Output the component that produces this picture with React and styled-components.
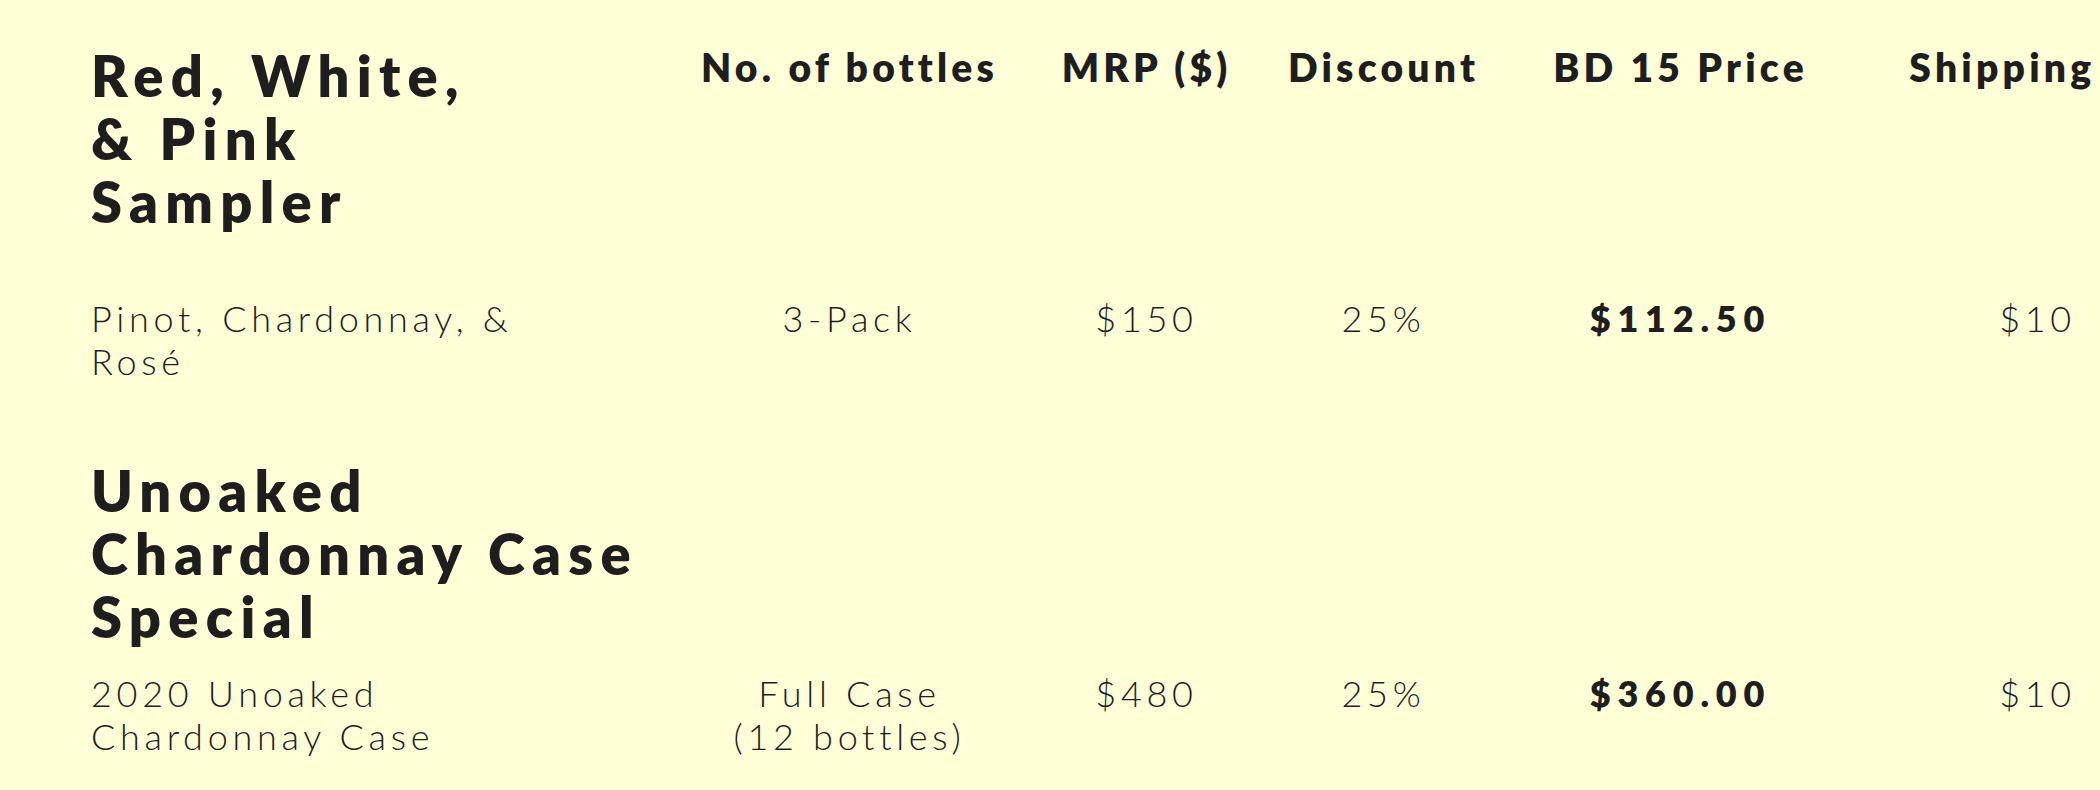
import styled, { createGlobalStyle } from 'styled-components';

const GlobalStyle = createGlobalStyle`
	html, body {
		margin: 0;
		background: #ffffd8;
	}

	body {
		overflow: hidden;
		color: #1e1e1e;
		font-family: 'Lato', 'Noto Sans', sans-serif;
	}
`;

// column tracks picked so each value column is centred where the original sits
const COLUMNS = '610px 297px 297px 177px 417px 297px';

const products = [
	{
		title: ['Red, White,', '& Pink', 'Sampler'],
		desc: ['Pinot, Chardonnay, &', 'Rosé'],
		bottles: ['3-Pack'],
		mrp: '$150',
		discount: '25%',
		price: '$112.50',
		shipping: '$10',
	},
	{
		title: ['Unoaked', 'Chardonnay Case', 'Special'],
		desc: ['2020 Unoaked', 'Chardonnay Case'],
		bottles: ['Full Case', '(12 bottles)'],
		mrp: '$480',
		discount: '25%',
		price: '$360.00',
		shipping: '$10',
	},
];

const labels = ['No. of bottles', 'MRP ($)', 'Discount', 'BD 15 Price', 'Shipping ($)'];

const Lines = ({ lines }) =>
	lines.map((line, i) => (
		<span key={i}>
			{line}
			{i < lines.length - 1 && <br />}
		</span>
	));

const PriceTableContainer = ({ className }) => {
	return (
		<div className={className}>
			{products.map((p, i) => (
				<section key={i} className={i === 0 ? 'first' : 'next'}>
					<Row>
						<Heading>
							<Lines lines={p.title} />
						</Heading>
						{labels.map((l) => (
							<Center key={l}>{i === 0 && <Label>{l}</Label>}</Center>
						))}
					</Row>
					<Row $gap={i === 0 ? 64 : 24}>
						<Desc>
							<Lines lines={p.desc} />
						</Desc>
						<Center>
							<Value>
								<Lines lines={p.bottles} />
							</Value>
						</Center>
						<Center>
							<Value>{p.mrp}</Value>
						</Center>
						<Center>
							<Value>{p.discount}</Value>
						</Center>
						<Center>
							<Value $bold>{p.price}</Value>
						</Center>
						<Center>
							<Value>{p.shipping}</Value>
						</Center>
					</Row>
				</section>
			))}
		</div>
	);
};

const PriceTable = styled(PriceTableContainer)`
	padding: 44px 0 0 91px;
	width: max-content;

	& section.next {
		margin-top: 76px;
	}
`;

const Row = styled.div`
	display: grid;
	grid-template-columns: ${COLUMNS};
	align-items: start;
	margin-top: ${(p) => p.$gap || 0}px;
`;

const Center = styled.div`
	display: flex;
	justify-content: center;
	min-width: 0;
`;

const Heading = styled.h2`
	margin: 0;
	font-size: 56px;
	line-height: 63px;
	font-weight: 800;
	letter-spacing: 7.3px;
	white-space: nowrap;
`;

const Label = styled.div`
	font-size: 39px;
	line-height: 47px;
	font-weight: 800;
	letter-spacing: 4.2px;
	text-align: center;
	white-space: nowrap;
`;

const Desc = styled.div`
	font-size: 36px;
	line-height: 43px;
	font-weight: 300;
	letter-spacing: 4.7px;
	white-space: nowrap;
`;

const Value = styled(Desc)`
	text-align: center;
	font-weight: ${(p) => (p.$bold ? 800 : 300)};
	letter-spacing: ${(p) => (p.$bold ? 6.8 : 4.7)}px;
`;

export default function App() {
	return (
		<>
			<GlobalStyle />
			<PriceTable />
		</>
	);
}
